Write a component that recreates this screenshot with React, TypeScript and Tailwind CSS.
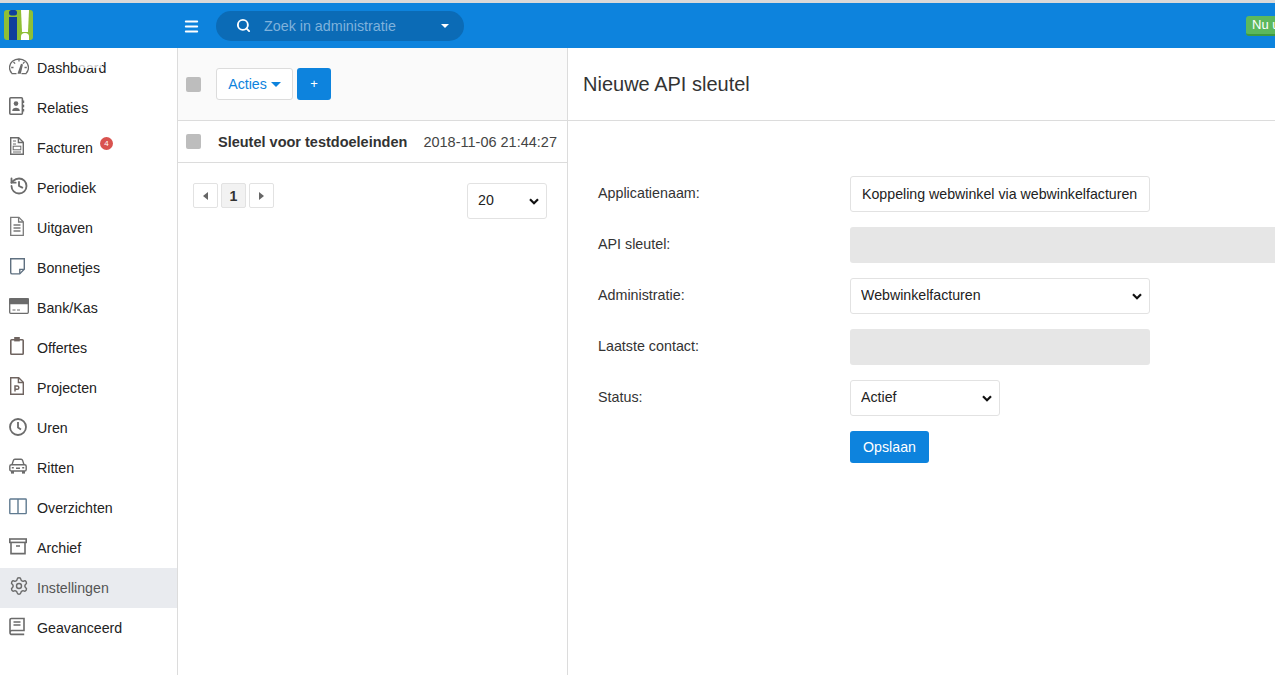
import { History, Search, Settings, Menu } from 'lucide-react';
import type { ReactNode } from 'react';

type NavItem = { label: string; icon: ReactNode; badge?: string; active?: boolean };

function Ico({ children, sw = 1.6, color = '#6b6b6b' }: { children: ReactNode; sw?: number; color?: string }) {
  return (
    <svg viewBox="0 0 20 20" className="w-[20px] h-[20px]" fill="none" stroke={color} strokeWidth={sw}>
      {children}
    </svg>
  );
}

const NAV: NavItem[] = [
  {
    label: 'Dashboard',
    icon: (
      <Ico sw={1.3}>
        <path d="M2.8 17.2A9.5 8.6 0 1 1 17.2 17.2" />
        <path d="M2.5 17.6h5M12.5 17.6h5" />
        <path d="M10 3v2.5M4.5 6l1.6 1.6M15.5 6l-1.6 1.6M2.2 11.5h2.3M15.5 11.5h2.3" />
        <path d="M9.4 17l3-8.5.8.3-1.9 8.2z" fill="#6b6b6b" />
      </Ico>
    ),
  },
  {
    label: 'Relaties',
    icon: (
      <Ico>
        <rect x="0.8" y="1.8" width="12.6" height="16.4" rx="1" />
        <path d="M14.4 4.5v2.5M14.4 8.8v2.5M14.4 13v2.5" />
        <circle cx="7" cy="7.6" r="2.3" fill="#6b6b6b" stroke="none" />
        <path d="M3.2 15c0-4.2 7.6-4.2 7.6 0z" fill="#6b6b6b" stroke="none" />
      </Ico>
    ),
  },
  {
    label: 'Facturen',
    badge: '4',
    icon: (
      <Ico sw={1.4}>
        <path d="M1.7 1.7h8l4.6 4.6v12H1.7z" />
        <path d="M9.4 1.9v4.6h4.7" />
        <path d="M4 5h3M4 8h3M4 16h8" strokeWidth={1} />
        <rect x="4.2" y="10.2" width="7.6" height="3.6" strokeWidth={1} />
      </Ico>
    ),
  },
  {
    label: 'Periodiek',
    icon: <History className="w-[20px] h-[20px] text-[#6b6b6b]" strokeWidth={2.2} />,
  },
  {
    label: 'Uitgaven',
    icon: (
      <Ico sw={1.3} color="#7a7a7a">
        <path d="M1.7 1.3h8.2l4.4 4.4v13.6H1.7z" />
        <path d="M9.6 1.5v4.5h4.5" />
        <path d="M4.5 9h7M4.5 12h7M4.5 15h7" />
      </Ico>
    ),
  },
  {
    label: 'Bonnetjes',
    icon: (
      <Ico sw={1.4} color="#5f7080">
        <path d="M1.7 2.7h13.6v10.6l-4.6 4.6H3.2a1.5 1.5 0 0 1-1.5-1.5z" />
        <path d="M15 13.4h-4.2v4.2" />
      </Ico>
    ),
  },
  {
    label: 'Bank/Kas',
    icon: (
      <Ico sw={1.3}>
        <rect x="0.7" y="2.7" width="18.6" height="14.6" rx="1" />
        <rect x="0.7" y="3" width="18.6" height="4.6" fill="#6b6b6b" />
        <path d="M3.5 14h3M8 14h3" strokeWidth={1} />
      </Ico>
    ),
  },
  {
    label: 'Offertes',
    icon: (
      <Ico sw={1.6} color="#6f6460">
        <rect x="1.8" y="3.8" width="12.4" height="14.4" rx="0.8" />
        <rect x="5.2" y="1" width="5.6" height="4.4" fill="#6f6460" stroke="none" />
      </Ico>
    ),
  },
  {
    label: 'Projecten',
    icon: (
      <Ico sw={1.4} color="#6f6460">
        <path d="M1.7 1.7h8l4.6 4.6v12H1.7z" />
        <path d="M9.4 1.9v4.6h4.7" />
        <path d="M6 15.5v-5.5h2.2a1.6 1.6 0 0 1 0 3.3H6" strokeWidth={1.5} />
      </Ico>
    ),
  },
  {
    label: 'Uren',
    icon: (
      <Ico sw={1.8}>
        <circle cx="9" cy="11" r="8" />
        <path d="M9 6v5.5l3 2" />
      </Ico>
    ),
  },
  {
    label: 'Ritten',
    icon: (
      <Ico sw={1.4}>
        <rect x="0.8" y="8.7" width="16.4" height="6.3" rx="1.6" />
        <path d="M3 8.8l1.4-4.4a1.6 1.6 0 0 1 1.5-1.1h6.2a1.6 1.6 0 0 1 1.5 1.1L15 8.8" />
        <rect x="2" y="15" width="3" height="2.6" fill="#6b6b6b" stroke="none" />
        <rect x="13" y="15" width="3" height="2.6" fill="#6b6b6b" stroke="none" />
        <path d="M2.8 11.8h2M13.2 11.8h2M7 12.3h4" />
      </Ico>
    ),
  },
  {
    label: 'Overzichten',
    icon: (
      <Ico sw={1.4} color="#5f7a90">
        <rect x="0.8" y="3" width="16.4" height="14.6" rx="0.6" />
        <path d="M9 3v14.6" />
      </Ico>
    ),
  },
  {
    label: 'Archief',
    icon: (
      <Ico sw={1.6}>
        <rect x="0.8" y="3" width="16.4" height="3.4" />
        <path d="M2 6.4v11.2h14V6.4M7 10h4" />
      </Ico>
    ),
  },
  {
    label: 'Instellingen',
    icon: <Settings className="w-[20px] h-[20px] text-[#6b6b6b]" strokeWidth={1.7} />,
    active: true,
  },
  {
    label: 'Geavanceerd',
    icon: (
      <Ico sw={1.6}>
        <path d="M1 16.4V4a1.5 1.5 0 0 1 1.5-1.5H15v12H3a2 2 0 0 0-2 1.9 2 2 0 0 0 2 2h12.2" />
        <path d="M4.5 6h7M4.5 9h7" />
      </Ico>
    ),
  },
];

function Logo() {
  return (
    <svg viewBox="0 0 29 30" className="w-[29px] h-[30px]">
      <rect width="29" height="30" rx="3" fill="#8fbf36" />
      <rect x="5" y="7" width="8" height="23" fill="#0f3f9c" />
      <rect x="5" y="0" width="8" height="5.5" rx="2.5" fill="#0f3f9c" />
      <path d="M17 0h8l-1 22h-6z" fill="#fff" />
      <path d="M17 30v-3.5a4 3.5 0 0 1 8 0V30z" fill="#fff" />
    </svg>
  );
}

function Checkbox() {
  return <span className="block w-[15px] h-[15px] rounded-[2px] bg-[#bdbdbd]" />;
}

function Chevron() {
  return (
    <svg viewBox="0 0 10 7" className="pointer-events-none absolute right-[8px] top-[15px] w-[10px] h-[7px]" fill="none" stroke="#111" strokeWidth="2.2">
      <path d="M1 1.2l4 4 4-4" />
    </svg>
  );
}

function Select({ value, cls }: { value: string; cls: string }) {
  return (
    <div className={`relative h-[36px] ${cls}`}>
      <select
        defaultValue={value}
        className="appearance-none w-full h-full rounded-[3px] border border-[#e2e2e2] bg-white pl-[10px] text-[14.2px] text-[#222]"
      >
        <option>{value}</option>
      </select>
      <Chevron />
    </div>
  );
}

function Row({ label, children }: { label: string; children: ReactNode }) {
  return (
    <div className="flex items-center mb-[15px] h-[36px]">
      <label className="w-[252px] shrink-0 text-[14.3px] text-[#333]">{label}</label>
      {children}
    </div>
  );
}

export default function App() {
  return (
    <div className="h-[675px] w-[1275px] overflow-hidden flex flex-col bg-white text-[14.2px] text-[#222] font-['Liberation_Sans',Arial,sans-serif]">
      {/* Header */}
      <header className="h-[48px] shrink-0 border-t-[3px] border-[#d9d9d9] bg-[#0d83dd] flex items-center overflow-hidden">
        <div className="w-[177px] shrink-0 pl-[4px] mb-[1px]">
          <Logo />
        </div>
        <Menu className="w-[17px] h-[17px] shrink-0 text-white ml-[6px] mt-[2px]" strokeWidth={2.8} />
        <div className="ml-[16px] w-[248px] h-[30px] shrink-0 rounded-full bg-[#0b6bb6] flex items-center">
          <Search className="w-[15px] h-[15px] shrink-0 text-white ml-[20px]" strokeWidth={3} />
          <span className="ml-[13px] pt-[3px] text-[14.3px] text-[#7fb2dc]">Zoek in administratie</span>
          <span className="ml-auto mr-[15px] w-0 h-0 border-x-[4px] border-x-transparent border-t-[4px] border-t-white" />
        </div>
        <button className="ml-[782px] mt-[1px] shrink-0 whitespace-nowrap h-[20px] px-[6px] rounded-[3px] bg-[#5cb85c] border-b-2 border-[#3f9a3f] text-[13px] leading-[18px] text-white">
          Nu upgraden
        </button>
      </header>

      <div className="flex flex-1 min-h-0">
        {/* Sidebar */}
        <nav className="w-[178px] shrink-0 border-r border-[#dcdcdc]">
          {NAV.map(item => (
            <div
              key={item.label}
              className={`relative h-[40px] flex items-center ${item.active ? 'bg-[#e9ebef]' : ''}`}
            >
              <span className="w-[37px] shrink-0 pl-[9px] pb-[4px] flex items-center">{item.icon}</span>
              <span className={`pt-[2px] ${item.active ? 'text-[#555]' : 'text-[#222]'}`}>{item.label}</span>
              {item.badge && (
                <span className="ml-[7px] mb-[9px] w-[13px] h-[13px] rounded-full bg-[#d9534f] text-white text-[8px] leading-[13px] text-center">
                  {item.badge}
                </span>
              )}
              {item.label === 'Dashboard' && (
                <span className="absolute left-[78px] top-[13px] w-[24px] h-[7px] bg-white/75" />
              )}
            </div>
          ))}
        </nav>

        {/* List */}
        <section className="w-[390px] shrink-0 border-r border-[#dcdcdc]">
          <div className="h-[73px] bg-[#fafafa] border-b border-[#dcdcdc] flex items-center pl-[8px]">
            <Checkbox />
            <button className="ml-[15px] pt-[1px] h-[32px] w-[77px] rounded-[3px] border border-[#dcdcdc] bg-white text-[#0d83dd] flex items-center justify-center gap-[4px]">
              Acties
              <span className="w-0 h-0 border-x-[5px] border-x-transparent border-t-[5px] border-t-[#0d83dd]" />
            </button>
            <button className="ml-[4px] h-[32px] w-[34px] rounded-[3px] bg-[#0d83dd] text-white text-[13px]">+</button>
          </div>
          <div className="h-[42px] border-b border-[#dcdcdc] flex items-center pl-[8px] pr-[10px] text-[14.5px]">
            <Checkbox />
            <span className="ml-[17px] pt-[3px] font-bold text-[#333]">Sleutel voor testdoeleinden</span>
            <span className="ml-auto pt-[3px] text-[#444]">2018-11-06 21:44:27</span>
          </div>
          <div className="flex items-start pl-[15px] pr-[20px] pt-[20px]">
            <div className="flex gap-[3px]">
              <span className="w-[25px] h-[25px] rounded-[2px] border border-[#e2e2e2] flex items-center justify-center">
                <span className="w-0 h-0 border-y-[4px] border-y-transparent border-r-[5px] border-r-[#666]" />
              </span>
              <span className="w-[25px] h-[25px] pt-[2px] rounded-[2px] border border-[#e2e2e2] bg-[#f2f2f2] flex items-center justify-center font-bold text-[#333]">
                1
              </span>
              <span className="w-[25px] h-[25px] rounded-[2px] border border-[#e2e2e2] flex items-center justify-center">
                <span className="w-0 h-0 border-y-[4px] border-y-transparent border-l-[5px] border-l-[#666]" />
              </span>
            </div>
            <Select value="20" cls="ml-auto w-[80px]" />
          </div>
        </section>

        {/* Detail */}
        <section className="flex-1 min-w-0 overflow-hidden">
          <div className="h-[73px] border-b border-[#dcdcdc] flex items-center pl-[15px]">
            <h1 className="text-[20px] text-[#333] pb-[1px]">Nieuwe API sleutel</h1>
          </div>
          <div className="pl-[30px] pt-[55px]">
            <Row label="Applicatienaam:">
              <input
                readOnly
                defaultValue="Koppeling webwinkel via webwinkelfacturen"
                className="w-[300px] h-[36px] rounded-[3px] border border-[#e2e2e2] bg-white px-[11px] text-[14.2px] text-[#222]"
              />
            </Row>
            <Row label="API sleutel:">
              <div className="w-[600px] shrink-0 h-[36px] rounded-[3px] bg-[#e6e6e6]" />
            </Row>
            <Row label="Administratie:">
              <Select value="Webwinkelfacturen" cls="w-[300px]" />
            </Row>
            <Row label="Laatste contact:">
              <div className="w-[300px] h-[36px] rounded-[3px] bg-[#e6e6e6]" />
            </Row>
            <Row label="Status:">
              <Select value="Actief" cls="w-[150px]" />
            </Row>
            <button className="ml-[252px] pt-[2px] h-[32px] w-[79px] rounded-[3px] bg-[#0d83dd] text-white text-[14.2px]">Opslaan</button>
          </div>
        </section>
      </div>
    </div>
  );
}
